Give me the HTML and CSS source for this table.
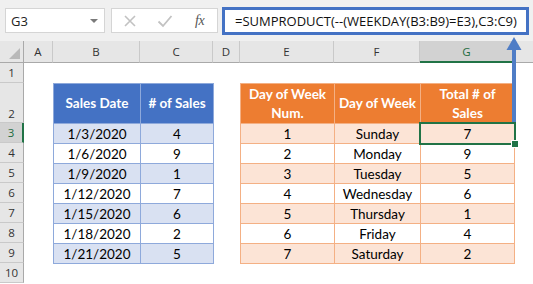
FILE: index.html
```html
<!DOCTYPE html>
<html>
<head>
<meta charset="utf-8">
<link rel="stylesheet" href="styles.css">
</head>
<body>
<div class="app">
  <div class="toolbar">
    <div class="namebox"><span class="ref">G3</span><span class="caret"></span></div>
    <div class="fxbox">
      <svg class="ico" width="14" height="14" viewBox="0 0 14 14"><path d="M2 2 L12 12 M12 2 L2 12" stroke="#c2c2c2" stroke-width="1.6" fill="none"/></svg>
      <svg class="ico" width="16" height="14" viewBox="0 0 16 14"><path d="M1.5 7.5 L6 12 L14.5 2" stroke="#c2c2c2" stroke-width="1.8" fill="none"/></svg>
      <span class="fx">fx</span>
    </div>
    <div class="formula">=SUMPRODUCT(--(WEEKDAY(B3:B9)=E3),C3:C9)</div>
  </div>
  <div class="sheet">
    <div class="corner"></div>
    <div class="colh">A</div>
    <div class="colh">B</div>
    <div class="colh">C</div>
    <div class="colh">D</div>
    <div class="colh">E</div>
    <div class="colh">F</div>
    <div class="colh selc">G</div>
    <div class="colh last"></div>

    <div class="rowh r1">1</div>
    <div class="rowh r2 bottom">2</div>
    <div class="rowh r3 selr">3</div>
    <div class="rowh r4">4</div>
    <div class="rowh r5">5</div>
    <div class="rowh r6">6</div>
    <div class="rowh r7">7</div>
    <div class="rowh r8">8</div>
    <div class="rowh r9">9</div>
    <div class="rowh r10">10</div>

    <div class="tbl blue">
      <div class="th">Sales Date</div><div class="th"># of Sales</div>
      <div class="td a">1/3/2020</div><div class="td a">4</div>
      <div class="td">1/6/2020</div><div class="td">9</div>
      <div class="td a">1/9/2020</div><div class="td a">1</div>
      <div class="td">1/12/2020</div><div class="td">7</div>
      <div class="td a">1/15/2020</div><div class="td a">6</div>
      <div class="td">1/18/2020</div><div class="td">2</div>
      <div class="td a">1/21/2020</div><div class="td a">5</div>
    </div>

    <div class="tbl orange">
      <div class="th">Day of Week<br>Num.</div><div class="th">Day of Week</div><div class="th">Total # of<br>Sales</div>
      <div class="td a">1</div><div class="td a">Sunday</div><div class="td a sel">7</div>
      <div class="td">2</div><div class="td">Monday</div><div class="td">9</div>
      <div class="td a">3</div><div class="td a">Tuesday</div><div class="td a">5</div>
      <div class="td">4</div><div class="td">Wednesday</div><div class="td">6</div>
      <div class="td a">5</div><div class="td a">Thursday</div><div class="td a">1</div>
      <div class="td">6</div><div class="td">Friday</div><div class="td">4</div>
      <div class="td a">7</div><div class="td a">Saturday</div><div class="td a">2</div>
    </div>
  </div>
  <svg class="arrow" width="20" height="90" viewBox="0 0 20 90">
    <rect x="7" y="12" width="4" height="74" fill="#4f7dc6"/>
    <polygon points="1.5,14 16.5,14 9,1" fill="#4f7dc6"/>
  </svg>
</div>
</body>
</html>
```

FILE: styles.css
```css
* { box-sizing: border-box; }
html, body { margin: 0; padding: 0; background: #fff; }
.app {
  position: relative;
  width: 533px;
  height: 284px;
  overflow: hidden;
  font-family: "Open Sans", "Noto Sans", sans-serif;
}
.toolbar {
  height: 41px;
  background: #f0f0f0;
  display: flex;
  align-items: flex-start;
  padding: 7px 0 0 5px;
}
.namebox {
  margin-top: 1px;
  width: 100px;
  height: 25px;
  background: #fff;
  border: 1px solid #d5d5d5;
  display: flex;
  align-items: center;
  justify-content: space-between;
  padding: 0 6px 0 5px;
  font-size: 13px;
  color: #222;
}
.caret {
  width: 0; height: 0;
  border-left: 4px solid transparent;
  border-right: 4px solid transparent;
  border-top: 4px solid #7a7a7a;
}
.fxbox {
  margin: 1px 0 0 6px;
  width: 107px;
  height: 25px;
  background: #fff;
  border: 1px solid #d5d5d5;
  display: flex;
  align-items: center;
  padding-left: 11px;
}
.fxbox .ico { margin-right: 20px; }
.fxbox .ico + .ico { margin-right: 22px; }
.fx {
  font-family: "Liberation Serif", serif;
  font-style: italic;
  font-size: 14px;
  color: #555;
  letter-spacing: -0.5px;
}
.formula {
  margin-left: 4px;
  width: 307px;
  height: 28px;
  border: 3px solid #4472c4;
  background: #fff;
  font-size: 13px;
  line-height: 22px;
  padding-left: 10px;
  color: #111;
  white-space: nowrap;
  overflow: hidden;
}
.sheet {
  display: grid;
  grid-template-columns: 24px 29px 87px 73px 27px 94px 86px 94px 1fr;
  grid-template-rows: 22px 20px 40px repeat(8, 20px);
  font-size: 11.5px;
}
.corner {
  background: #e6e6e6;
  border-right: 1px solid #a9a9a9;
  border-bottom: 1px solid #a9a9a9;
  position: relative;
}
.corner::after {
  content: "";
  position: absolute;
  right: 3px; bottom: 3px;
  width: 0; height: 0;
  border-left: 11px solid transparent;
  border-bottom: 11px solid #b9b9b9;
}
.colh {
  background: #e6e6e6;
  border-right: 1px solid #c9c9c9;
  border-bottom: 1px solid #a9a9a9;
  color: #333;
  display: flex;
  align-items: center;
  justify-content: center;
}
.colh.last { border-right: none; }
.colh.selc {
  background: #d2d2d2;
  color: #1e6b3f;
  border-bottom: 2px solid #217346;
}
.rowh {
  grid-column: 1;
  background: #e6e6e6;
  border-right: 1px solid #a9a9a9;
  border-bottom: 1px solid #c9c9c9;
  color: #333;
  display: flex;
  align-items: center;
  justify-content: center;
}
.rowh.bottom { align-items: flex-end; padding-bottom: 1px; }
.rowh.selr {
  background: #d2d2d2;
  color: #1e6b3f;
  border-right: 2px solid #217346;
}
.tbl {
  display: grid;
  gap: 1px;
  padding: 1px;
  align-self: start;
  justify-self: start;
  grid-row: 3 / 11;
  font-family: "Lato", sans-serif;
  font-size: 13.5px;
  color: #000;
}
.tbl .th, .tbl .td {
  display: flex;
  align-items: center;
  justify-content: center;
  text-align: center;
  background: #fff;
}
.tbl .th { color: #fff; font-weight: bold; line-height: 19px; }
.blue {
  grid-column: 3 / 5;
  grid-template-columns: 86px 72px;
  grid-template-rows: 39px repeat(7, 19px);
  background: #8ea9db;
}
.blue .th { background: #4472c4; }
.blue .td.a { background: #d9e1f2; }
.orange {
  grid-column: 6 / 9;
  grid-template-columns: 93px 85px 93px;
  grid-template-rows: 39px repeat(7, 19px);
  background: #f4b084;
}
.orange .th { background: #ed7d31; }
.orange .td.a { background: #fce4d6; }
.td.sel { position: relative; }
.td.sel::before {
  content: "";
  position: absolute;
  left: -2px; top: -2px; right: -2px; bottom: -2px;
  border: 2px solid #217346;
}
.td.sel::after {
  content: "";
  position: absolute;
  right: -5px; bottom: -5px;
  width: 6px; height: 6px;
  background: #217346;
  border: 1px solid #fff;
}
.arrow {
  position: absolute;
  left: 505px;
  top: 36px;
}
```
